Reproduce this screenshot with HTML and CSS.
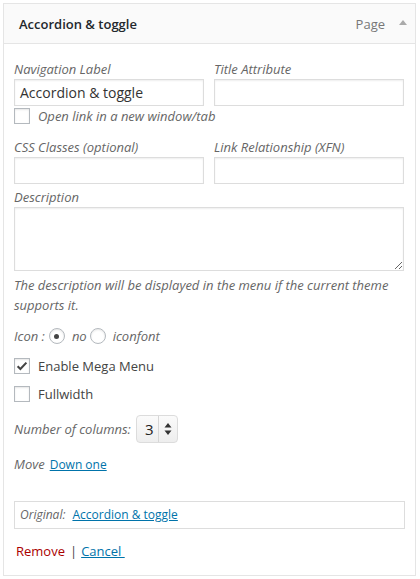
FILE: index.html
```html
<!DOCTYPE html>
<html lang="en">
<head>
<meta charset="utf-8">
<title>Menu item</title>
<link rel="stylesheet" href="styles.css">
</head>
<body>
<div class="item">
  <div class="item-bar">
    <span class="item-title">Accordion &amp; toggle</span>
    <span class="item-type">Page</span>
    <span class="item-arrow"></span>
  </div>
  <div class="settings">
    <div class="pair">
      <div class="field">
        <div class="lbl">Navigation Label</div>
        <div class="input filled">Accordion &amp; toggle</div>
      </div>
      <div class="field">
        <div class="lbl">Title Attribute</div>
        <div class="input"></div>
      </div>
    </div>
    <div class="check-row row-target">
      <span class="cb"></span>
      <span class="desc">Open link in a new window/tab</span>
    </div>
    <div class="pair pair-2">
      <div class="field">
        <div class="lbl">CSS Classes (optional)</div>
        <div class="input"></div>
      </div>
      <div class="field">
        <div class="lbl">Link Relationship (XFN)</div>
        <div class="input"></div>
      </div>
    </div>
    <div class="field field-desc">
      <div class="lbl">Description</div>
      <textarea class="area" rows="3"></textarea>
    </div>
    <p class="help">The description will be displayed in the menu if the current theme supports it.</p>
    <div class="icon-row">
      <span class="desc">Icon :</span>
      <span class="radio checked"></span>
      <span class="desc">no</span>
      <span class="radio second"></span>
      <span class="desc">iconfont</span>
    </div>
    <div class="check-row row-mega">
      <span class="cb"><svg viewBox="0 0 16 16" width="16" height="16"><path d="M3.6 8.2 L6.4 11 L12.4 4.6" fill="none" stroke="#444" stroke-width="2.1"/></svg></span>
      <span class="plain">Enable Mega Menu</span>
    </div>
    <div class="check-row row-full">
      <span class="cb"></span>
      <span class="plain">Fullwidth</span>
    </div>
    <div class="cols-row">
      <span class="desc">Number of columns:</span>
      <span class="select">
        <span class="select-val">3</span>
        <span class="select-arrows">
          <svg viewBox="0 0 8 12" width="8" height="12"><path d="M4 0 L7.5 4.5 H0.5 Z M4 12 L7.5 7.5 H0.5 Z" fill="#333"/></svg>
        </span>
      </span>
    </div>
    <div class="move-row">
      <span class="desc">Move</span>
      <a class="link small" href="#">Down one</a>
    </div>
    <div class="original">
      <span class="desc">Original:</span>
      <a class="link" href="#">Accordion &amp; toggle</a>
    </div>
    <div class="actions">
      <a class="remove" href="#">Remove</a>
      <span class="sep">|</span>
      <a class="link cancel" href="#">Cancel </a>
    </div>
  </div>
</div>
</body>
</html>
```

FILE: styles.css
```css
* { box-sizing: border-box; }
html, body { margin: 0; background: #fff; }
body {
  padding: 3px 0 0 3px;
  font-family: "Open Sans", "Liberation Sans", sans-serif;
  font-size: 13px;
  line-height: 18px;
  color: #444;
}
.item {
  width: 413px;
  border: 1px solid #e5e5e5;
}
.item-bar {
  height: 40px;
  display: flex;
  align-items: center;
  padding: 0 0 0 15px;
  background: #fafafa;
  border-bottom: 1px solid #e5e5e5;
}
.item-title {
  font-weight: 600;
  color: #23282d;
  flex: 1;
}
.item-type {
  color: #777;
  margin-right: 14px;
}
.item-arrow {
  width: 0;
  height: 0;
  border-left: 4px solid transparent;
  border-right: 4px solid transparent;
  border-bottom: 5px solid #aaa;
  margin-right: 8px;
  margin-top: -2px;
}
.settings {
  padding: 16px 10px 15px 10px;
  display: flex;
  flex-direction: column;
}
.pair {
  display: flex;
  gap: 10px;
}
.field { width: 190px; }
.lbl {
  font-style: italic;
  color: #666;
  height: 18px;
  margin-bottom: 1px;
}
.input {
  height: 27px;
  border: 1px solid #ddd;
  box-shadow: inset 0 1px 2px rgba(0,0,0,.07);
  background: #fff;
  font-size: 14px;
  line-height: 25px;
  padding: 0 5px;
  color: #333;
}
.check-row {
  display: flex;
  align-items: center;
  height: 16px;
}
.row-target { margin-top: 2px; }
.cb {
  width: 16px;
  height: 16px;
  border: 1px solid #b4b9be;
  box-shadow: inset 0 1px 2px rgba(0,0,0,.1);
  background: #fff;
  margin-right: 8px;
  flex: none;
  display: flex;
  align-items: center;
  justify-content: center;
}
.cb svg { display: block; margin: -1px; }
.desc {
  font-style: italic;
  color: #666;
}
.plain { color: #444; }
.pair-2 { margin-top: 14px; }
.field-desc { width: 390px; margin-top: 4px; }
.area {
  display: block;
  width: 390px;
  height: 64px;
  border: 1px solid #ddd;
  box-shadow: inset 0 1px 2px rgba(0,0,0,.07);
  margin: 0;
  resize: vertical;
  font-family: inherit;
}
.help {
  margin: 5px 0 0 0;
  font-style: italic;
  color: #666;
  line-height: 19.5px;
}
.icon-row {
  margin-top: 12px;
  display: flex;
  align-items: center;
  height: 18px;
}
.radio {
  width: 16px;
  height: 16px;
  border: 1px solid #b4b9be;
  border-radius: 50%;
  box-shadow: inset 0 1px 2px rgba(0,0,0,.1);
  background: #fff;
  margin: 0 7px 0 4px;
  display: flex;
  align-items: center;
  justify-content: center;
}
.radio.second { margin-left: 3px; }
.radio.checked::before {
  content: "";
  width: 5px;
  height: 5px;
  border-radius: 50%;
  background: #444;
}
.row-mega { margin-top: 13px; }
.row-full { margin-top: 12px; }
.cols-row {
  margin-top: 13px;
  display: flex;
  align-items: center;
  height: 28px;
}
.select {
  margin-left: 5px;
  width: 42px;
  height: 28px;
  border: 1px solid #dcdcdc;
  border-radius: 4px;
  background: linear-gradient(#fbfbfb, #eeeeee);
  display: flex;
  align-items: center;
}
.select-val {
  width: 22px;
  text-align: center;
  font-size: 15px;
  color: #222;
  border-right: 1px solid #d6d6d6;
  height: 26px;
  line-height: 26px;
  padding-left: 4px;
}
.select-arrows {
  flex: 1;
  display: flex;
  justify-content: center;
}
.select-arrows svg { display: block; }
.move-row {
  margin-top: 12px;
  display: flex;
  align-items: baseline;
  gap: 5px;
}
.link {
  color: #0073aa;
  text-decoration: underline;
}
.small { font-size: 12px; }
.original {
  margin-top: 27px;
  height: 28px;
  border: 1px solid #ddd;
  display: flex;
  align-items: center;
  gap: 7px;
  padding: 0 5px;
  font-size: 12px;
}
.actions {
  margin-top: 13px;
  display: flex;
  align-items: center;
  padding-left: 2px;
}
.remove { color: #a00; text-decoration: none; }
.sep { margin: 0 4px 0 5px; color: #444; }
.cancel { white-space: pre; }
```
